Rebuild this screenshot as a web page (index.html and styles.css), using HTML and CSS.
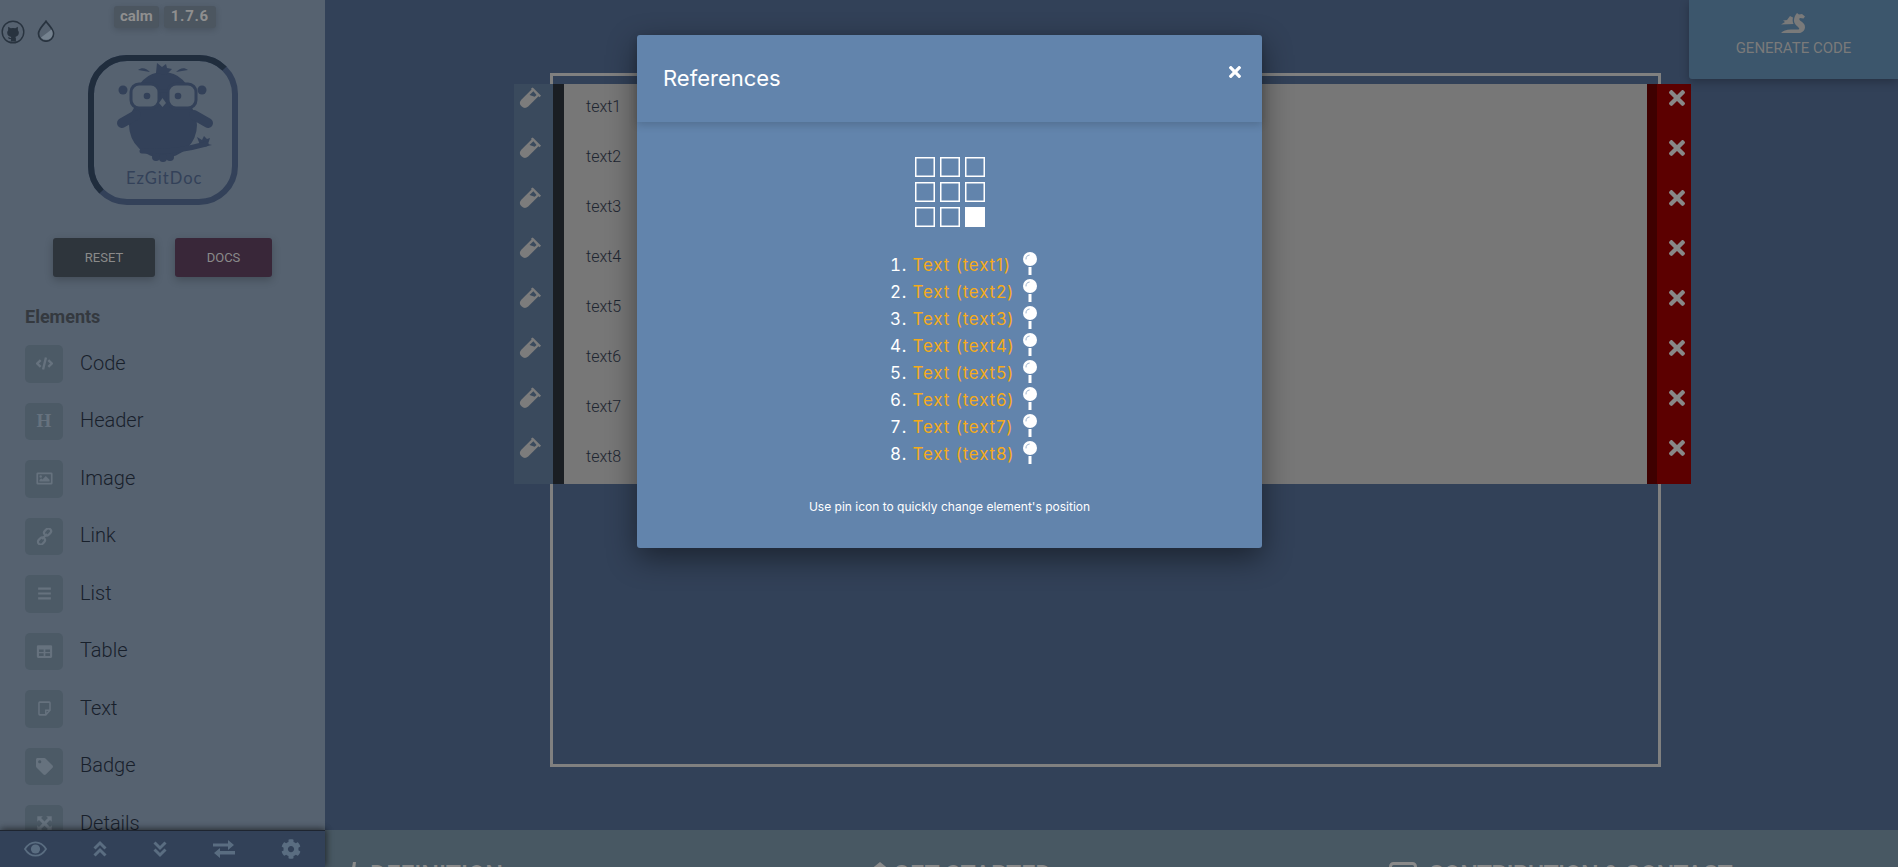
FILE: index.html
```html
<!DOCTYPE html>
<html lang="en">
<head>
<meta charset="utf-8">
<title>EzGitDoc</title>
<link rel="stylesheet" href="styles.css">
</head>
<body>
<svg class="defs" width="0" height="0" aria-hidden="true">
  <defs>
    <symbol id="vial" viewBox="0 0 24 24">
      <path fill-rule="evenodd" d="M15.2 1.200 23 9l-1.700 1.700-1-1L9.600 20.400a5.100 5.100 0 0 1-7.200-7.200L13.100 2.500l-.6-.6L14 .4zM15 4.400 11 8.400l5.300 1.900 2-2z"/>
    </symbol>
    <symbol id="times" viewBox="0 80 352 352">
      <path d="M242.72 256l100.07-100.07c12.28-12.28 12.28-32.19 0-44.48l-22.24-22.24c-12.28-12.28-32.19-12.28-44.48 0L176 189.28 75.93 89.21c-12.28-12.28-32.19-12.28-44.48 0L9.21 111.45c-12.28 12.28-12.28 32.19 0 44.48L109.28 256 9.21 356.07c-12.28 12.28-12.28 32.19 0 44.48l22.24 22.24c12.28 12.28 32.2 12.28 44.48 0L176 322.72l100.07 100.07c12.28 12.28 32.2 12.28 44.48 0l22.24-22.24c12.28-12.28 12.28-32.19 0-44.48L242.72 256z"/>
    </symbol>
    <symbol id="pin" viewBox="0 0 14 24">
      <rect x="5.500" y="15" width="3" height="8" fill="#fff"/>
      <circle cx="7" cy="7" r="7" fill="#fff"/>
      <path d="M3 7.400A4.200 4.200 0 0 1 6.600 3" fill="none" stroke="#9db4cf" stroke-width="1"/>
    </symbol>
  </defs>
</svg>
<div class="app">
  <aside class="sidebar">
    <div class="side-scroll">
      <div class="topbar">
        <div class="top-links">
          <svg class="ico-gh" viewBox="0 0 24 24"><circle cx="12" cy="12" r="10.800" fill="none" stroke="#28333f" stroke-width="1.400"/><path transform="translate(2.900 3.200) scale(.76)" fill="#28333f" d="M5.600 4.800 9 6.800a10 10 0 0 1 6 0l3.400-2v4.600c.9 1 1.300 2.100 1.300 3.300 0 3.200-2 4.900-4.700 5.300.6.5.8 1.200.8 2.100V24H9.200v-3.200c-2 .4-3.200-.5-3.900-2l1.600-.3c.4.9 1.100 1.200 2.300.9.100-.5.300-.9.600-1.200-2.700-.4-5.500-2-5.500-5.500 0-1.200.4-2.300 1.300-3.300z"/></svg>
          <svg class="ico-drop" viewBox="0 0 18 22"><path d="M9 1.200C6.500 5 1.500 9 1.500 13.700a7.500 7.500 0 0 0 15 0C16.500 9 11.500 5 9 1.200z" fill="none" stroke="#28333f" stroke-width="1.700"/><path d="M4 17.500 14.500 9.500c.8 1.400 1.200 2.800 1.200 4.200a6.700 6.700 0 0 1-11.700 3.800z" fill="#75828f"/></svg>
        </div>
        <div class="badges">
          <span class="badge">calm</span>
          <span class="badge badge-ver">1.7.6</span>
        </div>
      </div>
      <svg class="logo" viewBox="0 0 150 150">
        <rect x="3" y="3" width="144" height="144" rx="36" fill="none" stroke="#334159" stroke-width="6"/>
        <path d="M13.500 136.500A36 36 0 0 1 3 111V39A36 36 0 0 1 39 3H111A36 36 0 0 1 136.500 13.500" fill="none" stroke="#202d3d" stroke-width="6"/>
        <g fill="#334159">
          <ellipse cx="75" cy="44" rx="28" ry="27"/>
          <ellipse cx="75" cy="70" rx="34" ry="33"/>
          <path d="M68 18 69 8l5 4 4-3 1 4 5 1-6 6z"/>
          <circle cx="35" cy="35" r="4.500"/>
          <circle cx="114" cy="35" r="4.500"/>
          <circle cx="68" cy="102" r="4"/><circle cx="75" cy="103" r="4"/><circle cx="82" cy="102" r="4"/>
          <path d="M112 90l-3-8 5 3 2-4 3 3 3-1-2 6 4 1-9 2z"/>
          <path d="M50 15c4-3 8-2 12 2-4-1-8-1-12-2zM100 15c-4-3-8-2-12 2 4-1 8-1 12-2z"/>
        </g>
        <g fill="none" stroke="#334159" stroke-linecap="round">
          <path d="M34 68 48 60M120 68 106 60" stroke-width="10"/>
          <path d="M54 96C80 98 100 94 118 89" stroke-width="5"/>
        </g>
        <rect x="43" y="29" width="28" height="24" rx="8" fill="#566270" stroke="#334159" stroke-width="3"/>
        <rect x="80" y="29" width="28" height="24" rx="8" fill="#566270" stroke="#334159" stroke-width="3"/>
        <path d="M71 36h9" stroke="#334159" stroke-width="3"/>
        <circle cx="59" cy="41" r="3.300" fill="#334159"/>
        <circle cx="90" cy="41" r="3.300" fill="#334159"/>
        <path d="M74.500 43l3.500 5-3.500 4-3.500-4z" fill="#566270"/>
        <text class="logo-text" x="38" y="129">EzGitDoc</text>
      </svg>
      <div class="btn-row">
        <button class="btn btn-reset">RESET</button>
        <button class="btn btn-docs">DOCS</button>
      </div>
      <h2 class="side-title">Elements</h2>
      <ul class="elements">
        <li class="el"><span class="el-ico"><svg viewBox="0 0 20 20"><path d="M5.500 6 1.500 10l4 4M14.500 6l4 4-4 4M11.700 3 8.300 17" fill="none" stroke="currentColor" stroke-width="2.800"/></svg></span>Code</li>
        <li class="el"><span class="el-ico el-h">H</span>Header</li>
        <li class="el"><span class="el-ico"><svg viewBox="0 0 20 20"><path fill-rule="evenodd" d="M2 3h16a1.500 1.500 0 0 1 1.500 1.500v11A1.500 1.500 0 0 1 18 17H2a1.500 1.500 0 0 1-1.500-1.500v-11A1.500 1.500 0 0 1 2 3zM2.500 5v10h15V5zM4 13.500v-1.800l2-2 1.500 1.500 4-4 4.500 4.300v2zM5.500 6.200a1.500 1.500 0 1 1 0 3 1.500 1.500 0 0 1 0-3z" fill="currentColor"/></svg></span>Image</li>
        <li class="el"><span class="el-ico"><svg viewBox="0 0 20 20"><g fill="none" stroke="currentColor" stroke-width="2.600"><rect x="9.800" y="1.200" width="9" height="6.400" rx="3.200" transform="rotate(-45 14.300 5.400)"/><rect x="1.200" y="12.400" width="9" height="6.400" rx="3.200" transform="rotate(-45 5.700 14.600)"/><path d="M7 13 13 7"/></g></svg></span>Link</li>
        <li class="el"><span class="el-ico"><svg viewBox="0 0 20 20"><path d="M2.500 3h15v2.600h-15zM2.500 8.700h15v2.600h-15zM2.500 14.400h15V17h-15z" fill="currentColor"/></svg></span>List</li>
        <li class="el"><span class="el-ico"><svg viewBox="0 0 20 20"><path fill-rule="evenodd" d="M2.500 2.500h15a1.500 1.500 0 0 1 1.500 1.500v12a1.500 1.500 0 0 1-1.500 1.500h-15A1.500 1.500 0 0 1 1 16V4a1.500 1.500 0 0 1 1.500-1.500zM3.500 7.500v3h5.500v-3zM11 7.500v3h5.500v-3zM3.500 12.200v3h5.500v-3zM11 12.200v3h5.500v-3z" fill="currentColor"/></svg></span>Table</li>
        <li class="el"><span class="el-ico"><svg viewBox="0 0 20 20"><path d="M4.500 2.500h11a1 1 0 0 1 1 1v8.500l-5 5.500h-7a1 1 0 0 1-1-1v-13a1 1 0 0 1 1-1zM16 12h-4.500v5" fill="none" stroke="currentColor" stroke-width="1.800"/></svg></span>Text</li>
        <li class="el"><span class="el-ico"><svg viewBox="0 0 512 512"><path fill="currentColor" d="M0 252.118V48C0 21.49 21.490 0 48 0h204.118a48 48 0 0 1 33.941 14.059l211.882 211.882c18.745 18.745 18.745 49.137 0 67.882L293.823 497.941c-18.745 18.745-49.137 18.745-67.882 0L14.059 286.059A48 48 0 0 1 0 252.118zM112 64c-26.510 0-48 21.490-48 48s21.490 48 48 48 48-21.490 48-48-21.490-48-48-48z"/></svg></span>Badge</li>
        <li class="el"><span class="el-ico"><svg viewBox="0 0 20 20"><path d="M1.500 1.500H8L6 3.500l4 4 4-4-2-2h6.500V8l-2-2-4 4 4 4 2-2v6.500H12l2-2-4-4-4 4 2 2H1.500V12l2 2 4-4-4-4-2 2z" fill="currentColor"/></svg></span>Details</li>
      </ul>
    </div>
    <nav class="side-bar">
      <svg class="bar-ico bar-eye" viewBox="0 0 24 16"><path d="M1 8c2.800-4.500 6.500-7 11-7s8.200 2.500 11 7c-2.800 4.500-6.500 7-11 7S3.800 12.500 1 8z" fill="none" stroke="currentColor" stroke-width="1.800"/><circle cx="12" cy="8" r="4.800" fill="currentColor"/></svg>
      <svg class="bar-ico bar-chev" viewBox="0 0 14 18"><path d="M1.500 8.500 7 3l5.500 5.500M1.500 15.500 7 10l5.500 5.500" fill="none" stroke="currentColor" stroke-width="3"/></svg>
      <svg class="bar-ico bar-chev" viewBox="0 0 14 18"><path d="M1.500 2.500 7 8l5.500-5.500M1.500 9.500 7 15l5.500-5.500" fill="none" stroke="currentColor" stroke-width="3"/></svg>
      <svg class="bar-ico bar-swap" viewBox="0 0 22 18"><path d="M0 3.500h15V0l6 5-6 5V6.500H0zM22 11H7V8l-6 5 6 5v-3.500h15z" fill="currentColor"/></svg>
      <svg class="bar-ico bar-gear" viewBox="0 0 512 512"><path fill="currentColor" d="M487.4 315.7l-42.6-24.6c4.300-23.200 4.300-47 0-70.200l42.600-24.600c4.900-2.800 7.100-8.600 5.500-14-11.100-35.600-30-67.800-54.700-94.600-3.800-4.100-10-5.100-14.800-2.300L380.800 110c-17.900-15.400-38.500-27.300-60.800-35.100V25.800c0-5.600-3.900-10.500-9.400-11.700-36.700-8.200-74.300-7.800-109.200 0-5.500 1.200-9.400 6.100-9.400 11.700V75c-22.200 7.900-42.800 19.800-60.800 35.100L88.700 85.500c-4.900-2.800-11-1.900-14.800 2.300-24.700 26.700-43.600 58.900-54.700 94.600-1.700 5.400.6 11.200 5.500 14L67.300 221c-4.300 23.200-4.300 47 0 70.200l-42.600 24.600c-4.900 2.800-7.100 8.600-5.500 14 11.100 35.600 30 67.800 54.700 94.600 3.800 4.100 10 5.100 14.800 2.300l42.600-24.600c17.900 15.400 38.500 27.300 60.800 35.100v49.200c0 5.600 3.900 10.500 9.400 11.700 36.700 8.200 74.300 7.800 109.200 0 5.500-1.200 9.400-6.100 9.400-11.700v-49.200c22.200-7.900 42.800-19.800 60.800-35.100l42.600 24.600c4.900 2.800 11 1.900 14.800-2.300 24.700-26.700 43.600-58.900 54.700-94.600 1.500-5.500-.7-11.300-5.600-14.100zM256 336c-44.100 0-80-35.900-80-80s35.900-80 80-80 80 35.900 80 80-35.900 80-80 80z"/></svg>
    </nav>
  </aside>

  <main class="main">
    <div class="canvas">
      <div class="frame">
        <div class="rows">
          <div class="row"><span class="r-tool"><svg><use href="#vial"/></svg></span><span class="r-grip"></span><span class="r-body">text1</span><span class="r-edge"></span><span class="r-del"><svg><use href="#times"/></svg></span></div>
          <div class="row"><span class="r-tool"><svg><use href="#vial"/></svg></span><span class="r-grip"></span><span class="r-body">text2</span><span class="r-edge"></span><span class="r-del"><svg><use href="#times"/></svg></span></div>
          <div class="row"><span class="r-tool"><svg><use href="#vial"/></svg></span><span class="r-grip"></span><span class="r-body">text3</span><span class="r-edge"></span><span class="r-del"><svg><use href="#times"/></svg></span></div>
          <div class="row"><span class="r-tool"><svg><use href="#vial"/></svg></span><span class="r-grip"></span><span class="r-body">text4</span><span class="r-edge"></span><span class="r-del"><svg><use href="#times"/></svg></span></div>
          <div class="row"><span class="r-tool"><svg><use href="#vial"/></svg></span><span class="r-grip"></span><span class="r-body">text5</span><span class="r-edge"></span><span class="r-del"><svg><use href="#times"/></svg></span></div>
          <div class="row"><span class="r-tool"><svg><use href="#vial"/></svg></span><span class="r-grip"></span><span class="r-body">text6</span><span class="r-edge"></span><span class="r-del"><svg><use href="#times"/></svg></span></div>
          <div class="row"><span class="r-tool"><svg><use href="#vial"/></svg></span><span class="r-grip"></span><span class="r-body">text7</span><span class="r-edge"></span><span class="r-del"><svg><use href="#times"/></svg></span></div>
          <div class="row"><span class="r-tool"><svg><use href="#vial"/></svg></span><span class="r-grip"></span><span class="r-body">text8</span><span class="r-edge"></span><span class="r-del"><svg><use href="#times"/></svg></span></div>
        </div>
      </div>
    </div>
    <footer class="footer">
      <div class="foot-item"><svg class="foot-ico" viewBox="0 0 12 24"><path d="M7 0h3L7 24H3z" fill="currentColor"/></svg>DEFINITION</div>
      <div class="foot-item"><svg class="foot-ico foot-wide" viewBox="0 0 20 24"><path d="M10 0l10 8v16H0V8z" fill="currentColor"/></svg>GET STARTED</div>
      <div class="foot-item foot-long"><svg class="foot-ico foot-box" viewBox="0 0 28 24"><rect x="1.500" y="1.500" width="25" height="30" rx="3" fill="none" stroke="currentColor" stroke-width="3"/></svg>CONTRIBUTION &amp; CONTACT</div>
    </footer>
  </main>

  <button class="generate">
    <svg class="dragon" viewBox="0 0 26 20"><path fill="currentColor" d="M16 0l2 1.500L21 1l3 2.500-1.500 2-3.500-.5c-1 .5-1 1.500 0 2.500 3 2 5 3.500 5 6.500 0 3.500-3 6-6 6H0c2-2 5-3.500 10-3.500h7c1 0 1.500-.7 1-1.500-1-1.500-5-3.500-5-7.500 0-3 1-5 3-7.500zM9 3l3 1.500c-.5 2-.5 4 .5 6.500l-12.500.5 4-2.500-2-1.500 4-.5z"/></svg>
    <span>GENERATE CODE</span>
  </button>

  <section class="modal">
    <header class="modal-head">
      <h1 class="modal-title">References</h1>
      <svg class="modal-close"><use href="#times"/></svg>
    </header>
    <div class="modal-body">
      <div class="pos-grid">
        <i class="cell"></i><i class="cell"></i><i class="cell"></i>
        <i class="cell"></i><i class="cell"></i><i class="cell"></i>
        <i class="cell"></i><i class="cell"></i><i class="cell cell-on"></i>
      </div>
      <ol class="refs">
        <li class="ref"><span class="ref-text">Text (text1)</span><svg class="ref-pin"><use href="#pin"/></svg></li>
        <li class="ref"><span class="ref-text">Text (text2)</span><svg class="ref-pin"><use href="#pin"/></svg></li>
        <li class="ref"><span class="ref-text">Text (text3)</span><svg class="ref-pin"><use href="#pin"/></svg></li>
        <li class="ref"><span class="ref-text">Text (text4)</span><svg class="ref-pin"><use href="#pin"/></svg></li>
        <li class="ref"><span class="ref-text">Text (text5)</span><svg class="ref-pin"><use href="#pin"/></svg></li>
        <li class="ref"><span class="ref-text">Text (text6)</span><svg class="ref-pin"><use href="#pin"/></svg></li>
        <li class="ref"><span class="ref-text">Text (text7)</span><svg class="ref-pin"><use href="#pin"/></svg></li>
        <li class="ref"><span class="ref-text">Text (text8)</span><svg class="ref-pin"><use href="#pin"/></svg></li>
      </ol>
      <p class="modal-note">Use pin icon to quickly change element's position</p>
    </div>
  </section>
</div>
</body>
</html>
```

FILE: styles.css
```css
* { box-sizing: border-box; }
html, body { margin: 0; height: 100%; overflow: hidden; }
body { font-family: Roboto, "Liberation Sans", sans-serif; background: #324158; }
.defs { display: block; height: 0; }

.app { position: relative; display: flex; width: 1898px; height: 867px; overflow: hidden; }

/* sidebar */
.sidebar { width: 325px; flex: none; height: 867px; display: flex; flex-direction: column; background: #566270; }
.side-scroll { height: 830px; overflow: hidden; flex: none; }
.topbar { display: grid; grid-template-columns: 114px auto 1fr; padding-top: 6px; height: 44px; }
.top-links { display: flex; align-items: flex-start; padding: 14px 0 0 1px; gap: 12px; }
.ico-gh { width: 24px; height: 24px; flex: none; }
.ico-drop { width: 18px; height: 22px; flex: none; }
.badges { display: flex; gap: 5px; align-items: flex-start; }
.badge { height: 22px; line-height: 21px; padding: 0 6px; border-radius: 3px; background: #4c5660; color: #8f8f8f; font-size: 15px; font-weight: 700; box-shadow: 0 2px 6px rgba(0, 0, 0, .15); }
.badge-ver { padding: 0 7px; letter-spacing: .7px; }
.logo { display: block; width: 150px; height: 150px; margin: 11px 0 0 88px; }
.logo-text { font-family: Lato, sans-serif; font-size: 16.5px; letter-spacing: 1px; fill: #334159; }
.btn-row { display: flex; justify-content: center; gap: 20px; margin-top: 33px; }
.btn { height: 39px; border: 0; border-radius: 3px; font: 400 13px Roboto, sans-serif; color: #8a8a8a; box-shadow: 0 3px 8px rgba(0, 0, 0, .22); }
.btn-reset { width: 102px; background: #2e353c; }
.btn-docs { width: 97px; background: #392739; }
.side-title { margin: 28px 0 16px 25px; font-size: 18px; line-height: 24px; font-weight: 700; color: #34393f; }
.elements { list-style: none; margin: 0; padding: 0 0 0 25px; display: grid; grid-auto-rows: 37.5px; row-gap: 20px; }
.el { display: flex; align-items: center; gap: 17px; padding-bottom: 2px; font-size: 20px; font-weight: 300; color: #18202b; }
.el-ico { width: 38px; height: 37.5px; margin-bottom: -2px; border-radius: 5px; background: #4c5a66; color: #66727e; display: flex; align-items: center; justify-content: center; flex: none; }
.el-ico svg { width: 17px; height: 17px; }
.el-h { font: 700 19px "Liberation Serif", serif; }
.side-bar { height: 37px; flex: none; display: flex; align-items: center; gap: 46px; background: #324158; border-top: 1px solid #1e2530; color: #5a6d81; box-shadow: 0 -2px 6px rgba(0, 0, 0, .35), 3px 0 6px rgba(0, 0, 0, .25); position: relative; padding-left: 24px; }
.bar-ico { height: 18px; flex: none; }
.bar-eye { width: 23px; }
.bar-chev { width: 14px; }
.bar-swap { width: 22px; }
.bar-gear { width: 20px; height: 20px; }

/* main */
.main { flex: 1; min-width: 0; display: flex; flex-direction: column; }
.canvas { height: 830px; flex: none; padding: 73px 0 0 225px; overflow: hidden; }
.frame { width: 1111px; height: 694px; border: 3px solid #808080; padding-top: 8px; }
.rows { margin: 0 -33px 0 -39px; }
.row { display: flex; height: 50px; }
.r-tool { width: 39px; flex: none; background: #3a4a5d; padding: 3px 0 0 5px; fill: #7c7c7c; }
.r-tool svg { display: block; width: 23px; height: 23px; }
.r-grip { width: 11px; flex: none; background: #1a1e23; }
.r-body { flex: 1; background: #777; padding: 13px 0 0 22px; font-size: 16px; line-height: 20px; font-weight: 300; color: #1d2530; }
.r-edge { width: 10px; flex: none; background: #3f0000; }
.r-del { width: 34px; flex: none; background: #5c0000; padding: 6px 0 0 12px; fill: #888; }
.r-del svg { display: block; width: 16px; height: 16px; }
.footer { height: 37px; flex: none; overflow: hidden; background: #485863; display: grid; grid-template-columns: 522px 521px auto; padding: 34px 0 0 21px; color: #8a8a8a; }
.foot-item { display: flex; align-items: flex-start; font-size: 25px; font-weight: 500; line-height: 24px; white-space: nowrap; }
.foot-long { letter-spacing: -.7px; }
.foot-ico { width: 12px; height: 24px; margin: -2px 12px 0 0; flex: none; }
.foot-wide { width: 20px; margin: -2px 3px 0 2px; }
.foot-box { width: 28px; margin: -2px 11px 0 0; }

.generate { position: absolute; top: 0; right: 0; width: 209px; height: 79px; border: 0; border-bottom-left-radius: 3px; background: #3c566c; color: #7a7a7a; box-shadow: 0 3px 10px rgba(0, 0, 0, .25); display: flex; flex-direction: column; align-items: center; padding: 13px 0 0; font: 400 15px Roboto, sans-serif; }
.dragon { width: 26px; height: 20px; margin-bottom: 6px; }

/* modal */
.modal { position: absolute; left: 637px; top: 35px; width: 625px; height: 513px; border-radius: 3px; background: #6284ac; color: #fff; box-shadow: 0 10px 30px rgba(0, 0, 0, .45); font-family: Inter, sans-serif; }
.modal-head { height: 87px; display: flex; justify-content: space-between; align-items: flex-start; padding: 0 21px 0 26px; box-shadow: 0 3px 8px rgba(0, 0, 0, .16); }
.modal-title { margin: 30px 0 0; font-size: 22px; line-height: 26px; font-weight: 400; }
.modal-close { width: 12px; height: 12px; margin-top: 31px; fill: #fff; }
.modal-body { display: flex; flex-direction: column; align-items: center; padding-top: 35px; }
.pos-grid { display: grid; grid-template-columns: repeat(3, 20px); grid-auto-rows: 20px; gap: 5px; margin-left: 1px; }
.cell { box-shadow: inset 0 0 0 1.5px #fff; }
.cell-on { background: #fff; }
.refs { margin: 25px 0 0; padding: 0 0 0 50px; width: 174px; }
.ref { height: 27px; font-size: 17px; line-height: 27px; letter-spacing: .8px; color: #fff; white-space: nowrap; }
.ref-text { display: inline-block; width: 100px; color: #f5ab1a; }
.ref-pin { width: 14px; height: 24px; margin-left: 10px; vertical-align: top; }
.modal-note { margin: 31px 0 0; font-size: 12px; line-height: 16px; }
```
